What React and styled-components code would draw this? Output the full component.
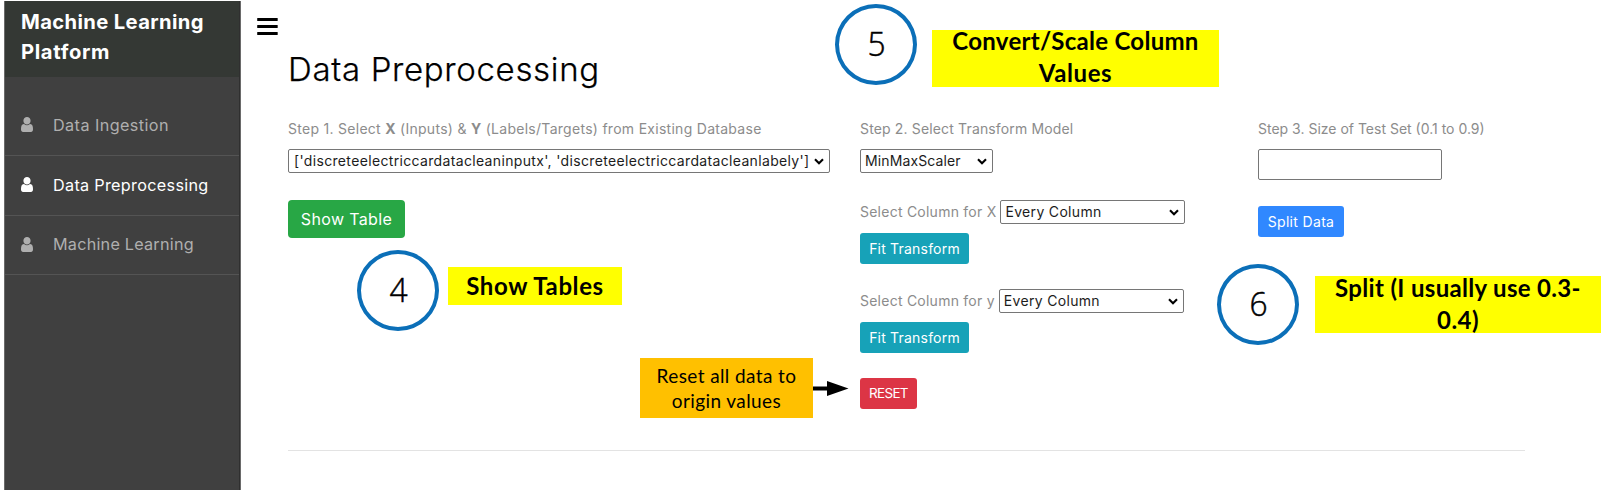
import React from "react";
import styled, { createGlobalStyle } from "styled-components";

const GlobalStyle = createGlobalStyle`
  *, *::before, *::after { box-sizing: border-box; }
  body {
    margin: 0;
    background: #fff;
    overflow: hidden;
    font-family: Inter, "Liberation Sans", sans-serif;
  }
`;

const Page = styled.div`
  position: relative;
  display: flex;
  width: 1605px;
  height: 491px;
  padding: 1px 0 1px 4px;
`;

const Track = styled.span`
  letter-spacing: ${(p) => p.$ls}px;
  white-space: nowrap;
`;

/* Sidebar */
const Sidebar = styled.nav`
  flex: none;
  width: 237px;
  background: #404040;
  border: 1px solid #6a6a6a;
  border-width: 0 1px 0 1px;
  box-shadow: inset -1px 0 0 #2f2f2f;
`;

const Brand = styled.h1`
  display: flex;
  flex-direction: column;
  height: 76px;
  margin: 0 1px 0 0;
  padding: 6px 0 0 16px;
  background: #343834;
  color: #fff;
  font-size: 20.2px;
  font-weight: 700;
  line-height: 30px;
`;

const NavList = styled.ul`
  margin: 19px 1px 0 0;
  padding: 0;
  list-style: none;
`;

const NavItem = styled.li`
  display: flex;
  align-items: center;
  height: ${(p) => p.$height}px;
  padding: 0 0 2px 16px;
  border-bottom: 1px solid #545454;
  color: ${(p) => (p.$active ? "#fff" : "#afafaf")};
  font-size: 16.2px;
  line-height: 24px;

  svg {
    width: 12px;
    height: 15px;
    margin-right: 20px;
    fill: currentColor;
  }
`;

/* Main area */
const Main = styled.main`
  flex: 1;
  display: flex;
  align-items: flex-start;
  padding: 16px 80px 0 16px;
`;

const MenuButton = styled.button`
  flex: none;
  display: flex;
  width: 21px;
  height: 20px;
  padding: 0;
  border: 0;
  background: none;
`;

const Content = styled.section`
  width: 1237px;
  margin: 28px 0 0 10px;
`;

const Heading = styled.h2`
  margin: 0 0 24px;
  font-size: 33px;
  font-weight: 300;
  line-height: 48px;
  color: #000;
  -webkit-text-stroke: 0.25px #000;
`;

const Steps = styled.div`
  display: grid;
  grid-template-columns: 572px 398px 1fr;
  height: 334px;
  border-bottom: 1px solid #e3e3e3;
`;

const Step = styled.div`
  display: flex;
  flex-direction: column;
  align-items: flex-start;
`;

const Label = styled.div`
  color: #8c8c8c;
  font-size: 14px;
  line-height: 24px;
`;

const StepLabel = styled(Label)`
  margin-bottom: 8px;
`;

const Field = styled.div`
  display: flex;
  align-items: center;
  gap: ${(p) => p.$gap}px;
  margin-top: ${(p) => p.$top}px;
`;

const SelectBox = styled.div`
  display: flex;
  align-items: center;
  justify-content: space-between;
  width: ${(p) => p.$width}px;
  height: 24px;
  padding: 0 5px 0 ${(p) => p.$pad ?? 5}px;
  border: 1px solid #767676;
  border-radius: 2px;
  background: #fff;
  color: #1c1c1c;
  font-size: 14px;
  line-height: 22px;
`;

const TextInput = styled.input`
  width: 184px;
  height: 31px;
  padding: 1px 4px;
  border: 1px solid #767676;
  border-radius: 2px;
  background: #fff;
  font: inherit;
`;

const tones = {
  success: "#28a745",
  info: "#17a2b8",
  danger: "#dc3545",
  primary: "#3088ff",
};

const Button = styled.button`
  display: flex;
  align-items: center;
  justify-content: center;
  width: ${(p) => p.$width}px;
  height: ${(p) => (p.$large ? 38 : 31)}px;
  margin: ${(p) => p.$top}px 0 0;
  padding: 0;
  border: 0;
  border-radius: ${(p) => (p.$large ? 4 : 3)}px;
  background: ${(p) => tones[p.$tone]};
  color: #fff;
  font-family: inherit;
  font-size: ${(p) => p.$size ?? (p.$large ? 16 : 14)}px;
  line-height: 21px;
`;

/* Callouts laid over the page */
const Badge = styled.div`
  position: absolute;
  left: ${(p) => p.$x}px;
  top: ${(p) => p.$y}px;
  display: flex;
  align-items: center;
  justify-content: center;
  width: 82px;
  height: 81px;
  padding-bottom: 2px;
  border: 4px solid #0b6fb8;
  border-radius: 50%;
  background: #fff;
  color: #000;
  font-family: "Open Sans", sans-serif;
  font-size: 33px;
  font-weight: 300;
  line-height: 40px;
  -webkit-text-stroke: 0.5px #000;

  span { transform: scaleX(0.96); }
`;

const Note = styled.div`
  position: absolute;
  left: ${(p) => p.$x}px;
  top: ${(p) => p.$y}px;
  display: flex;
  flex-direction: column;
  align-items: center;
  justify-content: center;
  width: ${(p) => p.$w}px;
  height: ${(p) => p.$h}px;
  padding-bottom: ${(p) => p.$lift ?? 0}px;
  background: #ff0;
  color: #000;
  font-family: Lato, sans-serif;
  font-size: 24px;
  font-weight: 700;
  line-height: 32px;
`;

const ResetNote = styled(Note)`
  background: #ffc000;
  font-size: 19px;
  font-weight: 400;
  line-height: 25px;
`;

const Arrow = styled.svg`
  position: absolute;
  left: 813px;
  top: 380px;
  width: 36px;
  height: 17px;
`;

const UserIcon = () => (
  <svg viewBox="0 128 1280 1536" preserveAspectRatio="none" aria-hidden="true">
    <path d="M1280 1399q0 109-62.500 187t-150.500 78h-854q-88 0-150.500-78t-62.500-187q0-85 8.500-160.500t31.500-152 58.500-131 94-89 134.500-34.500q131 128 313 128t313-128q76 0 134.500 34.500t94 89 58.500 131 31.500 152 8.500 160.500zm-256-887q0 159-112.500 271.500t-271.500 112.500-271.500-112.500-112.500-271.500 112.500-271.500 271.500-112.500 271.500 112.500 112.500 271.500z" />
  </svg>
);

const MenuIcon = () => (
  <svg width="21" height="20" viewBox="0 0 21 20" aria-hidden="true">
    <rect x="0.200" y="1" width="20.500" height="3" rx="0.500" />
    <rect x="0.200" y="8" width="20.500" height="3" rx="0.500" />
    <rect x="0.200" y="15" width="20.500" height="3" rx="0.500" />
  </svg>
);

const Chevron = () => (
  <svg width="10" height="7" viewBox="0 0 10 7" aria-hidden="true">
    <path d="M1 1.200 5 5.200 9 1.200" fill="none" stroke="#000" strokeWidth="2.100" />
  </svg>
);

const Select = ({ width, pad, ls, children }) => (
  <SelectBox $width={width} $pad={pad} role="combobox">
    <Track $ls={ls}>{children}</Track>
    <Chevron />
  </SelectBox>
);

const navItems = [
  { text: "Data Ingestion", ls: 0.42, height: 60 },
  { text: "Data Preprocessing", ls: 0.31, height: 60, active: true },
  { text: "Machine Learning", ls: 0.23, height: 59 },
];

export default function App() {
  return (
    <>
      <GlobalStyle />
      <Page>
        <Sidebar>
          <Brand>
            <Track $ls={0.37}>Machine Learning</Track>
            <Track $ls={0.66}>Platform</Track>
          </Brand>
          <NavList>
            {navItems.map((item) => (
              <NavItem key={item.text} $active={item.active} $height={item.height}>
                <UserIcon />
                <Track $ls={item.ls}>{item.text}</Track>
              </NavItem>
            ))}
          </NavList>
        </Sidebar>

        <Main>
          <MenuButton aria-label="Toggle menu">
            <MenuIcon />
          </MenuButton>
          <Content>
            <Heading>
              <Track $ls={0.66}>Data Preprocessing</Track>
            </Heading>
            <Steps>
              <Step>
                <StepLabel>
                  <Track $ls={0.28}>
                    Step 1. Select <b>X</b> (Inputs) &amp; <b>Y</b> (Labels/Targets) from Existing Database
                  </Track>
                </StepLabel>
                <Select width={542} ls={0.34}>
                  ['discreteelectriccardatacleaninputx', 'discreteelectriccardatacleanlabely']
                </Select>
                <Button $tone="success" $large $width={117} $top={27}>
                  <Track $ls={0.35}>Show Table</Track>
                </Button>
              </Step>

              <Step>
                <StepLabel>
                  <Track $ls={0.15}>Step 2. Select Transform Model</Track>
                </StepLabel>
                <Select width={133} pad={4} ls={0.12}>MinMaxScaler</Select>
                <Field $top={27} $gap={4}>
                  <Label><Track $ls={0.24}>Select Column for X</Track></Label>
                  <Select width={185} pad={4} ls={0.32}>Every Column</Select>
                </Field>
                <Button $tone="info" $width={109} $top={9}>
                  <Track $ls={0.2}>Fit Transform</Track>
                </Button>
                <Field $top={25} $gap={4}>
                  <Label><Track $ls={0.24}>Select Column for y</Track></Label>
                  <Select width={185} pad={4} ls={0.32}>Every Column</Select>
                </Field>
                <Button $tone="info" $width={109} $top={9}>
                  <Track $ls={0.2}>Fit Transform</Track>
                </Button>
                <Button $tone="danger" $width={57} $top={25} $size={13.5}>
                  <Track $ls={-0.7}>RESET</Track>
                </Button>
              </Step>

              <Step>
                <StepLabel>
                  <Track $ls={0}>Step 3. Size of Test Set (0.1 to 0.9)</Track>
                </StepLabel>
                <TextInput aria-label="Size of test set" />
                <Button $tone="primary" $width={86} $top={26}>
                  <Track $ls={0.33}>Split Data</Track>
                </Button>
              </Step>
            </Steps>
          </Content>
        </Main>

        <Badge $x={357} $y={250}><span>4</span></Badge>
        <Note $x={448} $y={267} $w={174} $h={38}>
          <Track $ls={0.6}>Show Tables</Track>
        </Note>

        <Badge $x={835} $y={4}><span>5</span></Badge>
        <Note $x={932} $y={30} $w={287} $h={57} $lift={3}>
          <Track $ls={0.27}>Convert/Scale Column</Track>
          <Track $ls={0.6}>Values</Track>
        </Note>

        <Badge $x={1217} $y={264}><span>6</span></Badge>
        <Note $x={1315} $y={276} $w={286} $h={57} $lift={1}>
          <Track $ls={0.32}>Split (I usually use 0.3-</Track>
          <Track $ls={0.45}>0.4)</Track>
        </Note>

        <ResetNote $x={640} $y={358} $w={173} $h={60}>
          <Track $ls={0.4}>Reset all data to</Track>
          <Track $ls={0.4}>origin values</Track>
        </ResetNote>
        <Arrow viewBox="0 0 36 17" aria-hidden="true">
          <path d="M0 6.500H14V1L35.500 8.500 14 16V10.500H0z" />
        </Arrow>
      </Page>
    </>
  );
}
